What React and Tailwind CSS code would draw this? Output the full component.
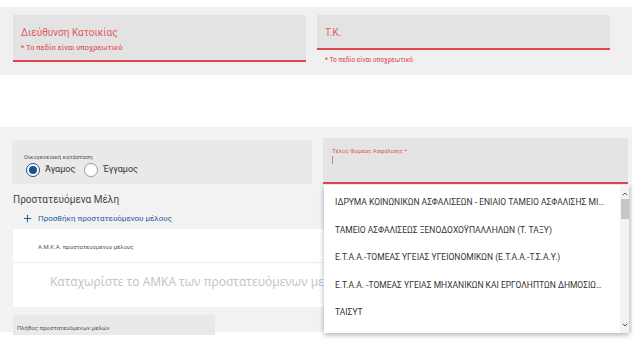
import { ChevronUp, ChevronDown, Plus } from 'lucide-react';

const funds = [
  'ΙΔΡΥΜΑ ΚΟΙΝΩΝΙΚΩΝ ΑΣΦΑΛΙΣΕΩΝ - ΕΝΙΑΙΟ ΤΑΜΕΙΟ ΑΣΦΑΛΙΣΗΣ ΜΙΣΘΩΤΩΝ',
  'ΤΑΜΕΙΟ ΑΣΦΑΛΙΣΕΩΣ ΞΕΝΟΔΟΧΟΫΠΑΛΛΗΛΩΝ (Τ. ΤΑΞΥ)',
  'Ε.Τ.Α.Α.-ΤΟΜΕΑΣ ΥΓΕΙΑΣ ΥΓΕΙΟΝΟΜΙΚΩΝ (Ε.Τ.Α.Α.-Τ.Σ.Α.Υ.)',
  'Ε.Τ.Α.Α. -ΤΟΜΕΑΣ ΥΓΕΙΑΣ ΜΗΧΑΝΙΚΩΝ ΚΑΙ ΕΡΓΟΛΗΠΤΩΝ ΔΗΜΟΣΙΩΝ ΕΡΓΩΝ',
  'ΤΑΙΣΥΤ',
];

function Radio({ checked, label }) {
  return (
    <label className="flex items-center gap-[5px]">
      <span className={`w-[14px] h-[14px] rounded-full border flex items-center justify-center bg-white ${checked ? 'border-[#1e4f8f]' : 'border-[#9a9a9a]'}`}>
        {checked && <span className="w-[8px] h-[8px] rounded-full bg-[#1e4f8f]" />}
      </span>
      <span className="text-[9px] text-[#333]">{label}</span>
    </label>
  );
}

export default function App() {
  return (
    <div className="w-[640px] h-[352px] bg-white overflow-hidden font-['Roboto',sans-serif] pt-[7px]">
      {/* Address block */}
      <div className="w-[632px] h-[68px] bg-[#f0f0f0] flex gap-[11px] pl-[13px] pt-[8px]">
        <div className="w-[293px] h-[47px] bg-[#e3e3e3] border-b-2 border-[#e0474c] pl-[8px] pt-[11px]">
          <p className="text-[10px] leading-[14px] text-[#e05a5e]">Διεύθυνση Κατοικίας</p>
          <p className="text-[7.5px] leading-[10px] mt-[3px] text-[#e0393e]">* Το πεδίο είναι υποχρεωτικό</p>
        </div>
        <div className="w-[293px]">
          <div className="h-[35px] bg-[#e3e3e3] border-b-2 border-[#e0474c] pl-[8px] pt-[11px]">
            <p className="text-[10px] leading-[14px] text-[#e05a5e]">Τ.Κ.</p>
          </div>
          <p className="text-[6.5px] leading-[10px] mt-[5px] pl-[8px] text-[#e0393e]">* Το πεδίο είναι υποχρεωτικό</p>
        </div>
      </div>

      {/* Insurance block */}
      <div className="relative mt-[52px] w-[632px] h-[205px] bg-[#f2f2f2] pt-[11px]">
        <div className="flex items-end gap-[11px] pl-[12px]">
          <div className="w-[300px] h-[44px] bg-[#e9e9e9] pl-[12px] pt-[13px]">
            <p className="text-[6px] leading-[8px] text-[#555]">Οικογενειακή κατάσταση</p>
            <div className="flex gap-[9px] mt-[2px] pl-[2px]">
              <Radio checked label="Άγαμος" />
              <Radio label="Έγγαμος" />
            </div>
          </div>
          <div className="w-[305px] h-[46px] bg-[#e4e4e4] border-b-2 border-[#e0474c] pl-[9px] pt-[9px]">
            <p className="text-[6px] leading-[8px] text-[#e05459]">Τέλος Φορέας Ασφάλισης *</p>
            <span className="block w-px h-[8px] bg-[#999] mt-[1px]" />
          </div>
        </div>

        <p className="mt-[9px] pl-[13px] text-[10px] leading-[14px] text-[#444]">Προστατευόμενα Μέλη</p>
        <div className="flex items-center gap-[5px] pl-[22px] mt-[6px] text-[#1f5a9e]">
          <Plus className="w-[11px] h-[11px]" strokeWidth={2.2} />
          <span className="text-[8px] leading-[10px]">Προσθήκη προστατευόμενου μέλους</span>
        </div>

        <div className="ml-[13px] mt-[5px] w-[313px] h-[78px] bg-white border-r border-[#e2e2e2]">
          <div className="h-[34px] border-b border-[#ececec] pl-[25px] pt-[14px]">
            <p className="text-[6px] leading-[8px] text-[#555]">Α.Μ.Κ.Α. προστατευόμενου μέλους</p>
          </div>
          <p className="pl-[37px] pt-[10px] whitespace-nowrap overflow-hidden text-[12px] leading-[18px] text-[#c2c2c2] font-['Open_Sans',sans-serif]">
            Καταχωρίστε το ΑΜΚΑ των προστατευόμενων μελών
          </p>
        </div>

        <div className="ml-[13px] mt-[8px] w-[202px] h-[20px] bg-[#e9e9e9] pl-[4px] pt-[9px]">
          <p className="text-[6px] leading-[8px] text-[#555]">Πλήθος προστατευόμενων μελών</p>
        </div>

        {/* Open select menu */}
        <div className="absolute left-[324px] top-[58px] w-[305px] h-[148px] bg-white shadow-[0_2px_5px_rgba(0,0,0,0.3)] flex">
          <ul className="flex-1 min-w-0 pt-[4px]">
            {funds.map((f) => (
              <li key={f} className="h-[27.5px] flex items-center pl-[11px] pr-[16px]">
                <span className="truncate text-[8.5px] text-[#333]">{f}</span>
              </li>
            ))}
          </ul>
          <div className="w-[9px] bg-[#f3f3f3] flex flex-col items-center">
            <ChevronUp className="w-[8px] h-[8px] mt-[5px] text-[#555]" strokeWidth={3} />
            <div className="w-[8px] h-[20px] bg-[#c6c6c6] mt-[1px]" />
            <div className="flex-1" />
            <ChevronDown className="w-[8px] h-[8px] mb-[4px] text-[#555]" strokeWidth={3} />
          </div>
        </div>
      </div>
    </div>
  );
}
